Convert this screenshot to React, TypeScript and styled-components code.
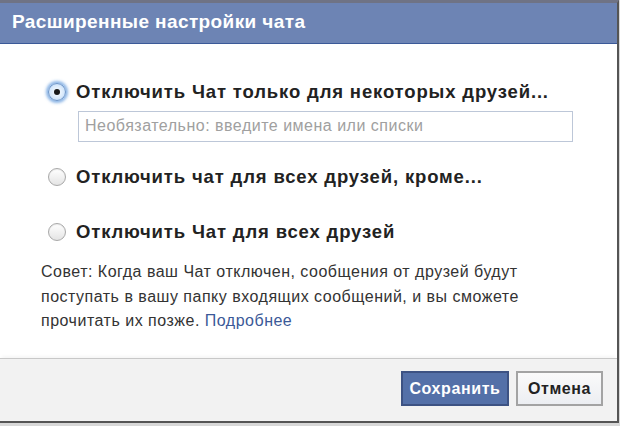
import React from "react";
import styled, { createGlobalStyle } from "styled-components";

const Global = createGlobalStyle`
  html, body { margin: 0; padding: 0; background: #dcdcdc; }
  body { font-family: "Liberation Sans", Arial, sans-serif; }
`;

const Frame = styled.div`
  width: 620px;
  height: 426px;
  box-sizing: border-box;
  background: #d8d8d8;
  overflow: hidden;
`;

const Dialog = styled.div`
  width: 619px;
  height: 423px;
  box-sizing: border-box;
  border-top: 3px solid #6f7385;
  border-right: 2px solid #555;
  border-bottom: 2px solid #555;
  display: flex;
  flex-direction: column;
  background: #fff;
`;

const Header = styled.div`
  height: 41px;
  box-sizing: border-box;
  background: #6d84b4;
  border-bottom: 1px solid #3b5998;
  color: #fff;
  font-weight: bold;
  font-size: 19px;
  letter-spacing: 0.4px;
  display: flex;
  align-items: center;
  padding: 0 0 2px 12px;
`;

const Body = styled.div`
  flex: 1;
  padding: 34px 0 0 48px;
  display: flex;
  flex-direction: column;
  border-top: 1px solid #fff;
`;

const Option = styled.label<{ $gap: number }>`
  display: flex;
  align-items: center;
  height: 26px;
  margin-top: ${(p) => p.$gap}px;
  gap: 10px;
  font-weight: bold;
  font-size: 18.5px;
  letter-spacing: 0.85px;
  color: #222;
`;

const Radio = styled.span<{ $checked?: boolean }>`
  width: 18px;
  height: 18px;
  border-radius: 50%;
  box-sizing: border-box;
  position: relative;
  flex: none;
  border: 1px solid ${(p) => (p.$checked ? "#6a93c8" : "#a8a8a8")};
  background: ${(p) =>
    p.$checked
      ? "radial-gradient(circle, #ffffff 0%, #d6e8fb 60%, #a8c8ee 100%)"
      : "linear-gradient(#ffffff, #e4e4e4)"};
  box-shadow: ${(p) =>
    p.$checked ? "0 0 3px 2px rgba(90,150,220,0.7)" : "inset 0 1px 1px rgba(0,0,0,0.08)"};
  &::after {
    content: "";
    display: ${(p) => (p.$checked ? "block" : "none")};
    position: absolute;
    left: 50%;
    top: 50%;
    width: 6px;
    height: 6px;
    margin: -3px 0 0 -3px;
    border-radius: 50%;
    background: #1a1a1a;
  }
`;

const Input = styled.div`
  margin: 6px 0 0 30px;
  width: 495px;
  height: 31px;
  box-sizing: border-box;
  border: 1px solid #bdc7d8;
  display: flex;
  align-items: center;
  padding: 0 0 1px 6px;
  color: #a0a0a0;
  font-size: 16px;
  letter-spacing: 0.5px;
`;

const Tip = styled.div`
  margin: 15px 0 0 -7px;
  width: 520px;
  font-size: 16px;
  letter-spacing: 0.5px;
  line-height: 24.5px;
  color: #333;
`;

const Link = styled.a`
  color: #3b5998;
  text-decoration: none;
`;

const Footer = styled.div`
  height: 63px;
  box-sizing: border-box;
  background: #f2f2f2;
  border-top: 1px solid #c8c8c8;
  box-shadow: 0 -4px 3px -2px rgba(0, 0, 0, 0.04);
  display: flex;
  justify-content: flex-end;
  align-items: center;
  gap: 7px;
  padding: 0 14px 3px 0;
`;

const Button = styled.button<{ $primary?: boolean }>`
  height: 35px;
  box-sizing: border-box;
  font-family: "Liberation Sans", Arial, sans-serif;
  font-weight: bold;
  font-size: 16px;
  letter-spacing: 0.6px;
  padding: 0;
  width: ${(p) => (p.$primary ? 108 : 87)}px;
  color: ${(p) => (p.$primary ? "#fff" : "#222")};
  background: ${(p) => (p.$primary ? "#5470a8" : "linear-gradient(#fafafa, #eceef2)")};
  border: ${(p) => (p.$primary ? "2px solid #3d5283" : "2px solid #a3a3a3")};
`;

export default function App() {
  return (
    <Frame>
      <Global />
      <Dialog>
        <Header>Расширенные настройки чата</Header>
        <Body>
          <Option $gap={0}>
            <Radio $checked />
            Отключить Чат только для некоторых друзей...
          </Option>
          <Input>Необязательно: введите имена или списки</Input>
          <Option $gap={22}>
            <Radio />
            Отключить чат для всех друзей, кроме...
          </Option>
          <Option $gap={29}>
            <Radio />
            Отключить Чат для всех друзей
          </Option>
          <Tip>
            Совет: Когда ваш Чат отключен, сообщения от друзей будут
            поступать в вашу папку входящих сообщений, и вы сможете
            прочитать их позже. <Link href="#">Подробнее</Link>
          </Tip>
        </Body>
        <Footer>
          <Button $primary>Сохранить</Button>
          <Button>Отмена</Button>
        </Footer>
      </Dialog>
    </Frame>
  );
}
